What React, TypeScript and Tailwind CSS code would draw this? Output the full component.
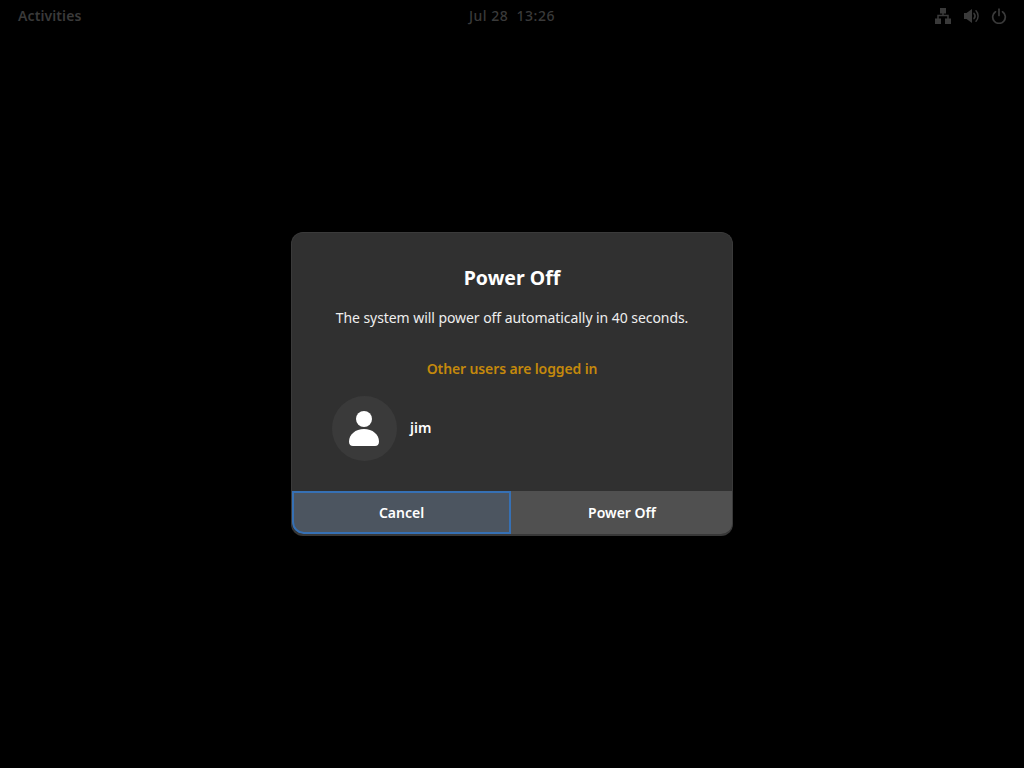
const font = { fontFamily: '"Noto Sans", sans-serif' };

function NetworkIcon() {
  return (
    <svg width="16" height="16" viewBox="0 0 16 16" fill="#3a3a3a" className="block">
      <path d="M5 0h6v5.500H8.750v1.250H13.750V10.500H16V16H10V10.500h2.250V8.250H3.750V10.500H6V16H0V10.500h2.250V6.750H7.250V5.500H5z" />
    </svg>
  );
}

function VolumeIcon() {
  return (
    <svg width="16" height="16" viewBox="0 0 16 16" fill="none" className="block">
      <path d="M1 5h2.500L9 1v14l-5.500-4H1z" fill="#3a3a3a" />
      <path d="M11 5.400a4 4 0 0 1 0 5.200M13 2.800a7.500 7.500 0 0 1 0 10.400" stroke="#3a3a3a" strokeWidth="1.500" strokeLinecap="round" />
    </svg>
  );
}

function PowerIcon() {
  return (
    <svg width="16" height="16" viewBox="0 0 16 16" fill="none" className="block">
      <path d="M4.500 3.800a6.300 6.300 0 1 0 7 0" stroke="#3a3a3a" strokeWidth="1.700" strokeLinecap="round" />
      <path d="M8 1.200v6.300" stroke="#3a3a3a" strokeWidth="1.700" strokeLinecap="round" />
    </svg>
  );
}

function UserIcon() {
  return (
    <svg width="32" height="36" viewBox="0 0 32 36" fill="white" className="block">
      <circle cx="16" cy="8" r="8" />
      <path d="M16 18c8.500 0 15 5.500 15 12.500 0 3-1.500 4.500-4 4.500H5c-2.500 0-4-1.500-4-4.500C1 23.500 7.500 18 16 18z" />
    </svg>
  );
}

export default function App() {
  return (
    <div className="w-full h-[768px] bg-black flex flex-col overflow-hidden" style={font}>
      <div className="h-[32px] shrink-0 grid grid-cols-3 items-center text-[#3a3a3a] text-[14px] font-semibold">
        <div className="pl-[18px] tracking-[0.1px] pb-[2px]">Activities</div>
        <div className="text-center font-medium tracking-[0.5px] whitespace-pre pb-[2px]">Jul 28  13:26</div>
        <div className="flex justify-end gap-[12px] pr-[17px]">
          <NetworkIcon />
          <VolumeIcon />
          <PowerIcon />
        </div>
      </div>
      <div className="mt-[200px] mx-auto w-[442px] h-[304px] rounded-[12px] bg-[#303030] border border-[#3a3a3a] border-b-2 border-b-[#383838] overflow-hidden flex flex-col text-white">
        <div className="flex-1 flex flex-col items-center">
          <div className="mt-[31px] h-[28px] leading-[28px] text-[19.5px] font-bold">Power Off</div>
          <div className="mt-[14px] h-[24px] leading-[24px] text-[14px] tracking-[-0.06px] text-[#eeeeee]">The system will power off automatically in 40 seconds.</div>
          <div className="mt-[27px] h-[24px] leading-[24px] text-[14px] tracking-[-0.12px] font-semibold text-[#c4890c]">Other users are logged in</div>
          <div className="self-stretch mt-[15px] ml-[40px] flex items-center gap-[13px]">
            <div className="w-[65px] h-[65px] rounded-full bg-[#3a3a3a] flex items-center justify-center pr-[1px]">
              <UserIcon />
            </div>
            <div className="text-[14px] font-semibold pb-[3px]">jim</div>
          </div>
        </div>
        <div className="h-[43px] shrink-0 flex text-[14px] font-semibold">
          <div className="w-[219px] bg-[#4c5560] border-2 border-[#3670b4] rounded-bl-[12px] flex items-center justify-center">Cancel</div>
          <div className="flex-1 bg-[#505050] flex items-center justify-center pl-[1px]">Power Off</div>
        </div>
      </div>
    </div>
  );
}
